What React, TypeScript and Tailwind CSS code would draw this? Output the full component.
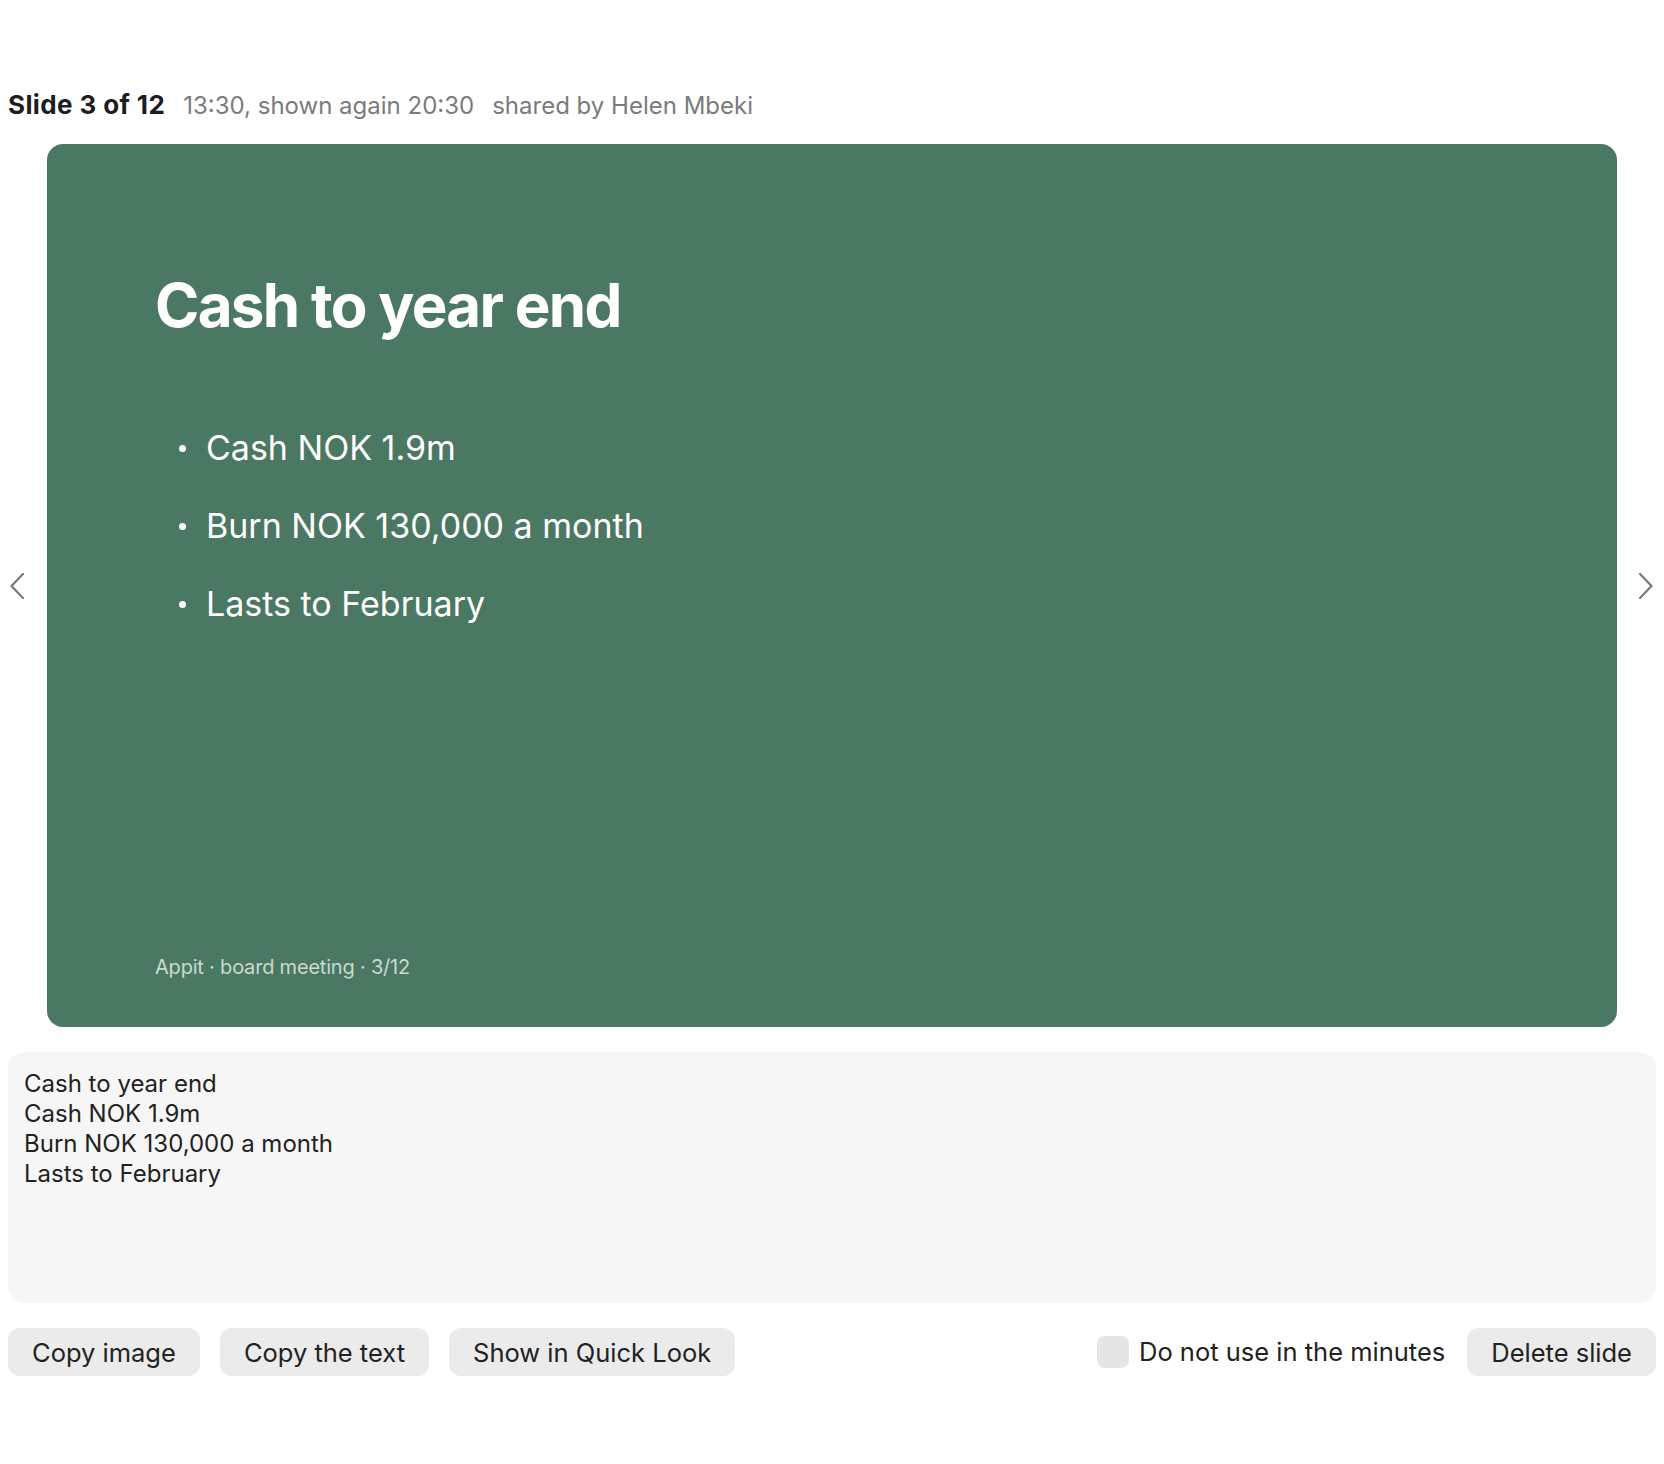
import React from "react";

const bullets = ["Cash NOK 1.9m", "Burn NOK 130,000 a month", "Lasts to February"];

function Chevron({ dir }: { dir: "left" | "right" }) {
  return (
    <svg width="14" height="26" viewBox="0 0 14 26" fill="none">
      <path
        d={dir === "left" ? "M13 1 L1.5 13 L13 25" : "M1 1 L12.5 13 L1 25"}
        stroke="#7a7a7a"
        strokeWidth="2.2"
        strokeLinecap="round"
        strokeLinejoin="round"
      />
    </svg>
  );
}

function Btn({ children }: { children: React.ReactNode }) {
  return (
    <button className="h-[48px] rounded-[12px] bg-[#ebebeb] px-[24px] pt-[2px] text-[25.5px] leading-[46px] text-[#222222]">
      {children}
    </button>
  );
}

export default function App() {
  return (
    <div
      className="min-h-screen bg-white px-2 pt-[89px]"
      style={{ fontFamily: "Inter, 'Noto Sans', sans-serif" }}
    >
      {/* slide header */}
      <div className="flex h-[32px] items-baseline gap-[18px] leading-[32px]">
        <span className="text-[26px] font-bold tracking-[0.015em] text-[#1d1d1f]">Slide 3 of 12</span>
        <span className="text-[24px] text-[#7b7b7b]">13:30, shown again 20:30</span>
        <span className="text-[24px] text-[#7b7b7b]">shared by Helen Mbeki</span>
      </div>

      {/* slide viewer */}
      <div className="-mx-2 mt-[23px] flex items-center">
        <button className="flex w-[47px] justify-start pl-[10px]">
          <Chevron dir="left" />
        </button>
        <div className="flex aspect-[16/9] flex-1 flex-col rounded-[16px] bg-[#4a7862] pl-[108px] pt-[130px] pb-[46px] text-white">
          <h1 className="text-[60px] font-bold leading-[62px] tracking-[-0.028em]">Cash to year end</h1>
          <ul className="mt-[73px] flex flex-col">
            {bullets.map((b) => (
              <li key={b} className="flex h-[78px] items-center pl-[24px]">
                <span className="h-[7px] w-[7px] rounded-full bg-white" />
                <span className="ml-[20px] text-[34px] leading-[78px]">{b}</span>
              </li>
            ))}
          </ul>
          <div className="mt-auto text-[20px] leading-[28px] tracking-[-0.01em] text-[#c9dbd0]">
            Appit · board meeting · 3/12
          </div>
        </div>
        <button className="flex w-[47px] justify-end pr-[11px]">
          <Chevron dir="right" />
        </button>
      </div>

      {/* extracted slide text */}
      <div className="mt-[25px] h-[251px] rounded-[16px] bg-[#f6f6f6] px-4 pt-[17px] text-[24px] leading-[30px] text-[#222222]">
        <div>Cash to year end</div>
        <div>Cash NOK 1.9m</div>
        <div>Burn NOK 130,000 a month</div>
        <div>Lasts to February</div>
      </div>

      {/* actions */}
      <div className="mt-[25px] flex items-center justify-between">
        <div className="flex gap-[20px]">
          <Btn>Copy image</Btn>
          <Btn>Copy the text</Btn>
          <Btn>Show in Quick Look</Btn>
        </div>
        <div className="flex items-center">
          <label className="flex items-center gap-[10px] text-[25.5px] text-[#222222]">
            <span className="h-[32px] w-[32px] rounded-[8px] bg-[#e6e6e6]" />
            Do not use in the minutes
          </label>
          <div className="ml-[22px]">
            <Btn>Delete slide</Btn>
          </div>
        </div>
      </div>
    </div>
  );
}
